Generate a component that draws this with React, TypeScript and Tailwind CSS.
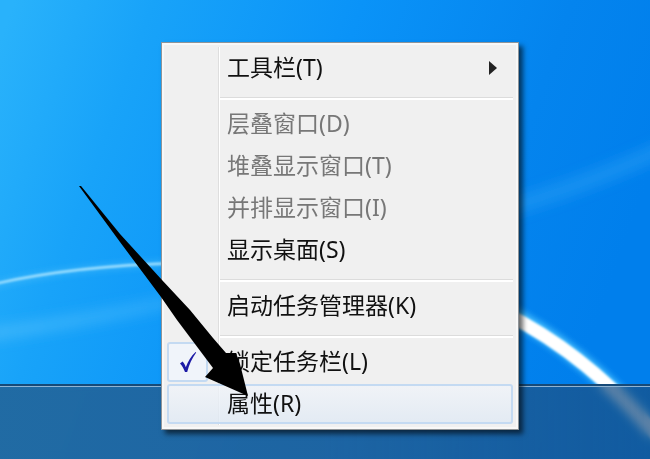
import { useState } from "react";

type MenuEntry = {
  id: string;
  label: string;
  kind: "action" | "submenu" | "toggle" | "separator";
  disabled?: boolean;
  active?: boolean;
};

const entries: MenuEntry[] = [
  { id: "toolbars", label: "工具栏(T)", kind: "submenu" },
  { id: "sep-1", label: "", kind: "separator" },
  { id: "cascade", label: "层叠窗口(D)", kind: "action", disabled: true },
  { id: "stacked", label: "堆叠显示窗口(T)", kind: "action", disabled: true },
  { id: "side", label: "并排显示窗口(I)", kind: "action", disabled: true },
  { id: "desktop", label: "显示桌面(S)", kind: "action" },
  { id: "sep-2", label: "", kind: "separator" },
  { id: "taskmgr", label: "启动任务管理器(K)", kind: "action" },
  { id: "sep-3", label: "", kind: "separator" },
  { id: "lock", label: "锁定任务栏(L)", kind: "toggle" },
  { id: "properties", label: "属性(R)", kind: "action", active: true },
];

const Wallpaper = () => (
  <svg
    className="absolute inset-0 h-full w-full"
    viewBox="0 0 650 459"
    preserveAspectRatio="none"
    aria-hidden="true"
  >
    <defs>
      <linearGradient id="sky" gradientUnits="userSpaceOnUse" x1="0" y1="40" x2="620" y2="260">
        <stop offset="0" stopColor="#29b2fb" />
        <stop offset="0.2" stopColor="#18a3f9" />
        <stop offset="0.5" stopColor="#0a93f8" />
        <stop offset="0.8" stopColor="#0484ee" />
        <stop offset="1" stopColor="#007fec" />
      </linearGradient>
      <linearGradient id="haze" x1="0" y1="0" x2="1" y2="0">
        <stop offset="0" stopColor="#4cbcfb" stopOpacity="0.6" />
        <stop offset="1" stopColor="#4cbcfb" stopOpacity="0.3" />
      </linearGradient>
      <filter id="soft1" x="-20%" y="-50%" width="140%" height="200%">
        <feGaussianBlur stdDeviation="0.8" />
      </filter>
      <filter id="soft3" x="-20%" y="-50%" width="140%" height="200%">
        <feGaussianBlur stdDeviation="3" />
      </filter>
      <filter id="soft6" x="-20%" y="-100%" width="140%" height="300%">
        <feGaussianBlur stdDeviation="6" />
      </filter>
    </defs>
    <rect width="650" height="459" fill="url(#sky)" />
    <path d="M-10 334 Q80 322 180 300" fill="none" stroke="url(#haze)" strokeWidth="15" filter="url(#soft6)" />
    <path d="M500 210 Q580 188 670 146" fill="none" stroke="#31a4f5" strokeOpacity="0.4" strokeWidth="18" filter="url(#soft6)" />
    <path d="M-10 286 Q70 266 180 263" fill="none" stroke="#4fc0fb" strokeOpacity="0.5" strokeWidth="6" filter="url(#soft3)" />
    <path d="M-10 285 Q70 266 180 263" fill="none" stroke="#a5e2ff" strokeWidth="2.4" filter="url(#soft1)" />
    <path d="M500 309 Q588 352 664 444" fill="none" stroke="#4cc3ff" strokeWidth="16" filter="url(#soft3)" />
    <path d="M500 311 Q588 353 662 442" fill="none" stroke="#ffffff" strokeWidth="13" filter="url(#soft1)" />
  </svg>
);

const Taskbar = () => (
  <footer className="relative mt-auto h-[75px] border-t-2 border-[#174a78] bg-linear-to-r from-[#22659a]/90 via-[#20609a]/90 to-[#184c80]/70 backdrop-blur-xs">
    <div className="h-px bg-[#8fb4d3]" />
  </footer>
);

const Gutter = () => (
  <span className="h-full w-[53px] shrink-0" aria-hidden="true" />
);

const ContextMenu = () => {
  const [locked, setLocked] = useState<boolean>(true);

  const renderEntry = (entry: MenuEntry) => {
    if (entry.kind === "separator") {
      return (
        <li key={entry.id} role="separator" className="h-[14px] pt-2 pl-[53px]">
          <div className="h-[3px] border-t border-[#dcdcdc] bg-white" />
        </li>
      );
    }

    if (entry.kind === "toggle") {
      return (
        <li key={entry.id} className="h-[42px] py-px">
          <label className="flex h-full items-center">
            <span className="grid h-full w-[53px] shrink-0 items-center">
              <input
                type="checkbox"
                checked={locked}
                onChange={(e) => setLocked(e.target.checked)}
                className="col-start-1 row-start-1 h-full w-[41px] appearance-none rounded-[3px] border-2 border-[#c4daf2] bg-[#f0f4fa]"
              />
              {locked && (
                <svg
                  viewBox="0 0 18 22"
                  className="pointer-events-none col-start-1 row-start-1 ml-3 h-[22px] w-[18px]"
                  aria-hidden="true"
                >
                  <path
                    d="M1 12.5 L3.6 10.6 C5 12 6 14 6.8 16.2 C9 10.5 12 5.2 16.6 1 L17.2 1.6 C13 7.5 10.2 13.5 8.2 21 L6 21 C4.6 17.4 3.2 14.8 1 12.5 Z"
                    fill="#1c1aa6"
                  />
                </svg>
              )}
            </span>
            <span className="pb-0.5 pl-[7px]">{entry.label}</span>
          </label>
        </li>
      );
    }

    return (
      <li key={entry.id} className="h-[42px] py-px">
        <button
          type="button"
          disabled={entry.disabled}
          className={
            entry.active
              ? "flex h-full w-full items-center rounded-[3px] bg-linear-to-b from-[#f1f4f9]/80 to-[#dfe9f4]/80 text-left inset-ring-2 inset-ring-[#c4daf2]"
              : "flex h-full w-full items-center text-left disabled:text-[#777777]"
          }
        >
          <Gutter />
          <span className="grow pb-0.5 pl-[7px]">{entry.label}</span>
          {entry.kind === "submenu" && (
            <svg viewBox="0 0 8 14" className="mr-4 h-[14px] w-2" aria-hidden="true">
              <path d="M0 0 L8 7 L0 14 Z" fill="#222222" />
            </svg>
          )}
        </button>
      </li>
    );
  };

  return (
    <nav className="absolute top-[42px] left-[161px] w-[358px] border border-[#8f9498] bg-[#f0f0f0] px-[5px] py-1 shadow-[4px_4px_5px_rgba(0,0,0,0.6)] inset-ring-2 inset-ring-[#f8f8f8]">
      <div
        className="absolute top-1 bottom-1 left-14 w-[2px] border-l border-[#dedede] bg-white"
        aria-hidden="true"
      />
      <ul className="relative">{entries.map(renderEntry)}</ul>
    </nav>
  );
};

const Pointer = () => (
  <svg
    className="pointer-events-none absolute top-[184px] left-[78px] h-[214px] w-[174px]"
    viewBox="78 184 174 214"
    aria-hidden="true"
  >
    <path
      d="M79 186 L81 186 L120 234 L162 280 L190 310 L213 338 L226 353 L236 353 L240 364 L248 396 L205 377 L213 368 L177 320 L161 297 L120 242 Z"
      fill="#000000"
    />
  </svg>
);

const App = () => {
  return (
    <main className="relative flex min-h-screen flex-col overflow-hidden font-['Noto_Sans','Noto_Sans_CJK_SC',sans-serif] text-[23px] leading-8 text-[#111111]">
      <Wallpaper />
      <Taskbar />
      <ContextMenu />
      <Pointer />
    </main>
  );
};

export default App;
